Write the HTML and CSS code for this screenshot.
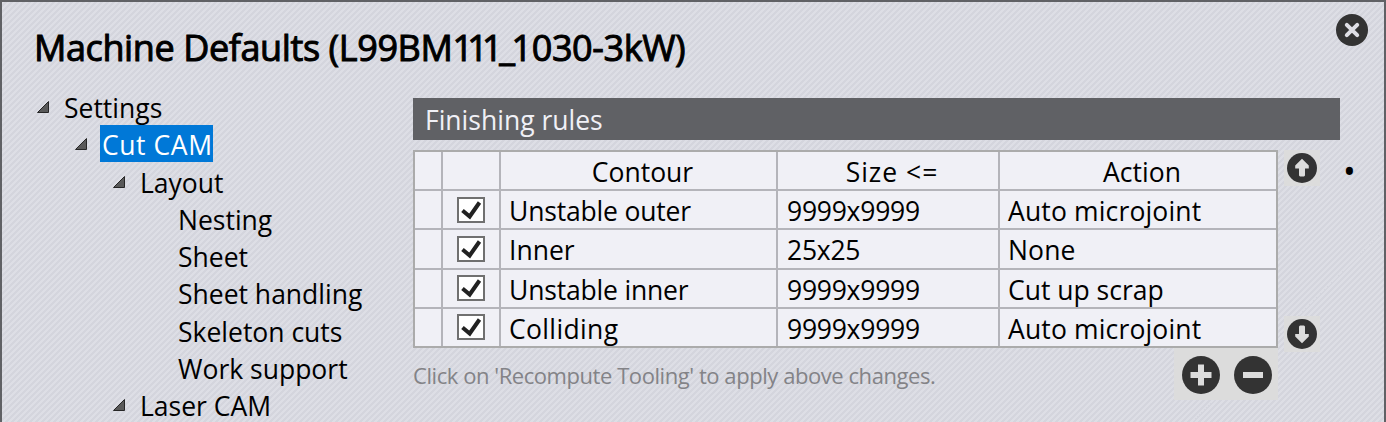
FILE: index.html
```html
<!DOCTYPE html>
<html lang="en">
<head>
<meta charset="utf-8">
<title>Machine Defaults</title>
<link rel="stylesheet" href="styles.css">
</head>
<body>
<main class="window">
  <header class="titlebar">
    <h1 class="title">Machine Defaults (L99BM<span class="ones">11</span><span class="joint">1_</span>1030-3kW)</h1>
    <button class="close" aria-label="Close">
      <svg width="32" height="32" viewBox="0 0 32 32"><circle cx="16" cy="16" r="16" fill="#333"/><path d="M10.800 10.800L21.200 21.200M21.200 10.800L10.800 21.200" stroke="#dedee4" stroke-width="4" stroke-linecap="round"/></svg>
    </button>
  </header>
  <div class="content">
    <nav class="tree">
      <div class="node l0"><svg class="arrow" viewBox="0 0 12 13"><path d="M.5 12.500H11.500V1.500Z"/></svg><span class="label">Settings</span></div>
      <div class="node l1"><svg class="arrow" viewBox="0 0 12 13"><path d="M.5 12.500H11.500V1.500Z"/></svg><span class="label selected">Cut CAM</span></div>
      <div class="node l2"><svg class="arrow" viewBox="0 0 12 13"><path d="M.5 12.500H11.500V1.500Z"/></svg><span class="label">Layout</span></div>
      <div class="node l3"><span class="label">Nesting</span></div>
      <div class="node l3"><span class="label">Sheet</span></div>
      <div class="node l3"><span class="label">Sheet handling</span></div>
      <div class="node l3"><span class="label">Skeleton cuts</span></div>
      <div class="node l3"><span class="label">Work support</span></div>
      <div class="node l2 last"><svg class="arrow" viewBox="0 0 12 13"><path d="M.5 12.500H11.500V1.500Z"/></svg><span class="label">Laser CAM</span></div>
    </nav>
    <section class="panel">
      <h2 class="section-title">Finishing rules</h2>
      <div class="rules">
        <div class="rules-main">
          <div class="grid">
            <div class="cell"></div><div class="cell"></div><div class="cell head">Contour</div><div class="cell head wide">Size &lt;=</div><div class="cell head">Action</div>
            <div class="cell"></div><div class="cell check"><svg class="box" viewBox="0 0 28 26"><rect x="1" y="1" width="26" height="24"/><path d="M5.500 13.500L12.700 19.500L22.500 5.500"/></svg></div><div class="cell name">Unstable outer</div><div class="cell num">9999x9999</div><div class="cell action">Auto microjoint</div>
            <div class="cell"></div><div class="cell check"><svg class="box" viewBox="0 0 28 26"><rect x="1" y="1" width="26" height="24"/><path d="M5.500 13.500L12.700 19.500L22.500 5.500"/></svg></div><div class="cell">Inner</div><div class="cell num">25x25</div><div class="cell action">None</div>
            <div class="cell"></div><div class="cell check raised"><svg class="box" viewBox="0 0 28 26"><rect x="1" y="1" width="26" height="24"/><path d="M5.500 13.500L12.700 19.500L22.500 5.500"/></svg></div><div class="cell name">Unstable inner</div><div class="cell num">9999x9999</div><div class="cell">Cut up scrap</div>
            <div class="cell"></div><div class="cell check raised"><svg class="box" viewBox="0 0 28 26"><rect x="1" y="1" width="26" height="24"/><path d="M5.500 13.500L12.700 19.500L22.500 5.500"/></svg></div><div class="cell colliding">Colliding</div><div class="cell num">9999x9999</div><div class="cell action">Auto microjoint</div>
          </div>
          <div class="footer">
            <p class="note">Click on 'Recompute Tooling' to apply above changes.</p>
            <div class="edit">
              <svg width="38" height="38" viewBox="0 0 38 38"><circle cx="19" cy="19" r="19" fill="#333"/><path d="M8.500 19H29.500M19 8.500V29.500" stroke="#dcdcdc" stroke-width="6"/></svg>
              <svg width="38" height="38" viewBox="0 0 38 38"><circle cx="19" cy="19" r="19" fill="#333"/><path d="M9 19H29" stroke="#dcdcdc" stroke-width="6"/></svg>
            </div>
          </div>
        </div>
        <div class="order">
          <svg width="36" height="36" viewBox="0 0 36 36"><circle cx="18" cy="18" r="15" fill="#333"/><path d="M18 8.700L24.800 15.500V18.500H21V25.500L20 26.500H16L15 25.500V18.500H11.200V15.500Z" fill="#dcdcdc"/></svg>
          <svg width="36" height="36" viewBox="0 0 36 36"><circle cx="18" cy="18" r="15" fill="#333"/><path d="M18 27.300L24.800 20.500V18H21V10.500L20 9.500H16L15 10.500V18H11.200V20.500Z" fill="#dcdcdc"/></svg>
        </div>
        <span class="bullet">•</span>
      </div>
    </section>
  </div>
</main>
</body>
</html>
```
FILE: styles.css
```css
* { box-sizing: border-box; }
body {
  margin: 0;
  font-family: "Open Sans", "Noto Sans", sans-serif;
  font-size: 26.500px;
  color: #000;
}
.window {
  width: 1386px;
  height: 422px;
  overflow: hidden;
  border: 2px solid #606165;
  border-bottom: 0;
  background: repeating-linear-gradient(135deg, #dddee5 0 2.120px, #d4d5dd 2.120px 4.240px);
}
.titlebar {
  display: flex;
  justify-content: space-between;
  height: 96px;
  padding: 12px 16px 0 32px;
}
.title {
  margin: 8px 0 0;
  font-size: 36px;
  font-weight: 400;
  -webkit-text-stroke: 1px #000;
  letter-spacing: -.4px;
  line-height: 52px;
  white-space: nowrap;
}
.ones { letter-spacing: -5.800px; }
.joint { letter-spacing: -3.400px; }
.close {
  width: 32px;
  height: 32px;
  padding: 0;
  border: 0;
  background: none;
}
svg { display: block; flex: none; }
.content { display: flex; }
.tree { width: 411px; margin-top: -10px; }
.node {
  display: flex;
  height: 37.300px;
  line-height: 41px;
  white-space: nowrap;
}
.l0 { padding-left: 35px; }
.l1 { padding-left: 73px; }
.l2 { padding-left: 111px; }
.l3 { padding-left: 176px; }
.arrow {
  width: 12px;
  height: 13px;
  margin: 12px 15px 0 0;
}
.arrow path { fill: #595959; stroke: #262626; stroke-width: 1; }
.selected {
  height: 37px;
  margin-left: -2px;
  padding: 0 0 0 2px;
  background: #0078d7;
  color: #fff;
  letter-spacing: .58px;
}
.section-title {
  width: 927px;
  height: 42px;
  margin: 0 0 10px;
  padding-left: 12px;
  background: #606165;
  color: #f0f0f6;
  font-size: 26.500px;
  font-weight: 400;
  line-height: 45px;
}
.rules { display: flex; }
.rules-main { width: 865px; }
.grid {
  display: grid;
  grid-template-columns: 26px 56px 275px 220px 276px;
  grid-template-rows: 37px 37px 38px 37px 37px;
  gap: 2px;
  border: 2px solid #ababab;
  background: #b4b4ba;
}
.cell {
  padding-left: 8px;
  background: #f0f0f6;
  line-height: 41px;
  white-space: nowrap;
}
.head { text-align: center; }
.wide { letter-spacing: 1px; }
.name { letter-spacing: -.18px; }
.colliding { letter-spacing: .35px; }
.num { padding-left: 9px; letter-spacing: -.25px; }
.action { letter-spacing: .15px; }
.check { padding: 6px 0 0 14px; }
.raised { padding-top: 5px; }
.box { width: 28px; height: 26px; }
.box rect { fill: #fff; stroke: #707070; stroke-width: 2; }
.box path { fill: none; stroke: #212121; stroke-width: 4; }
.footer { display: flex; justify-content: space-between; }
.note {
  margin: 0;
  color: #838387;
  font-size: 22px;
  letter-spacing: -.44px;
  line-height: 54px;
}
.edit {
  display: flex;
  gap: 14px;
  width: 104px;
  height: 52px;
  padding: 8px 0 0 8px;
  background: #dcdcdc;
}
.order {
  display: flex;
  flex-direction: column;
  justify-content: space-between;
  height: 202px;
  margin-left: 6px;
}
.order svg { background: #dcdcdc; }
.bullet { margin-left: 23px; font-size: 34px; line-height: 43px; }
```
